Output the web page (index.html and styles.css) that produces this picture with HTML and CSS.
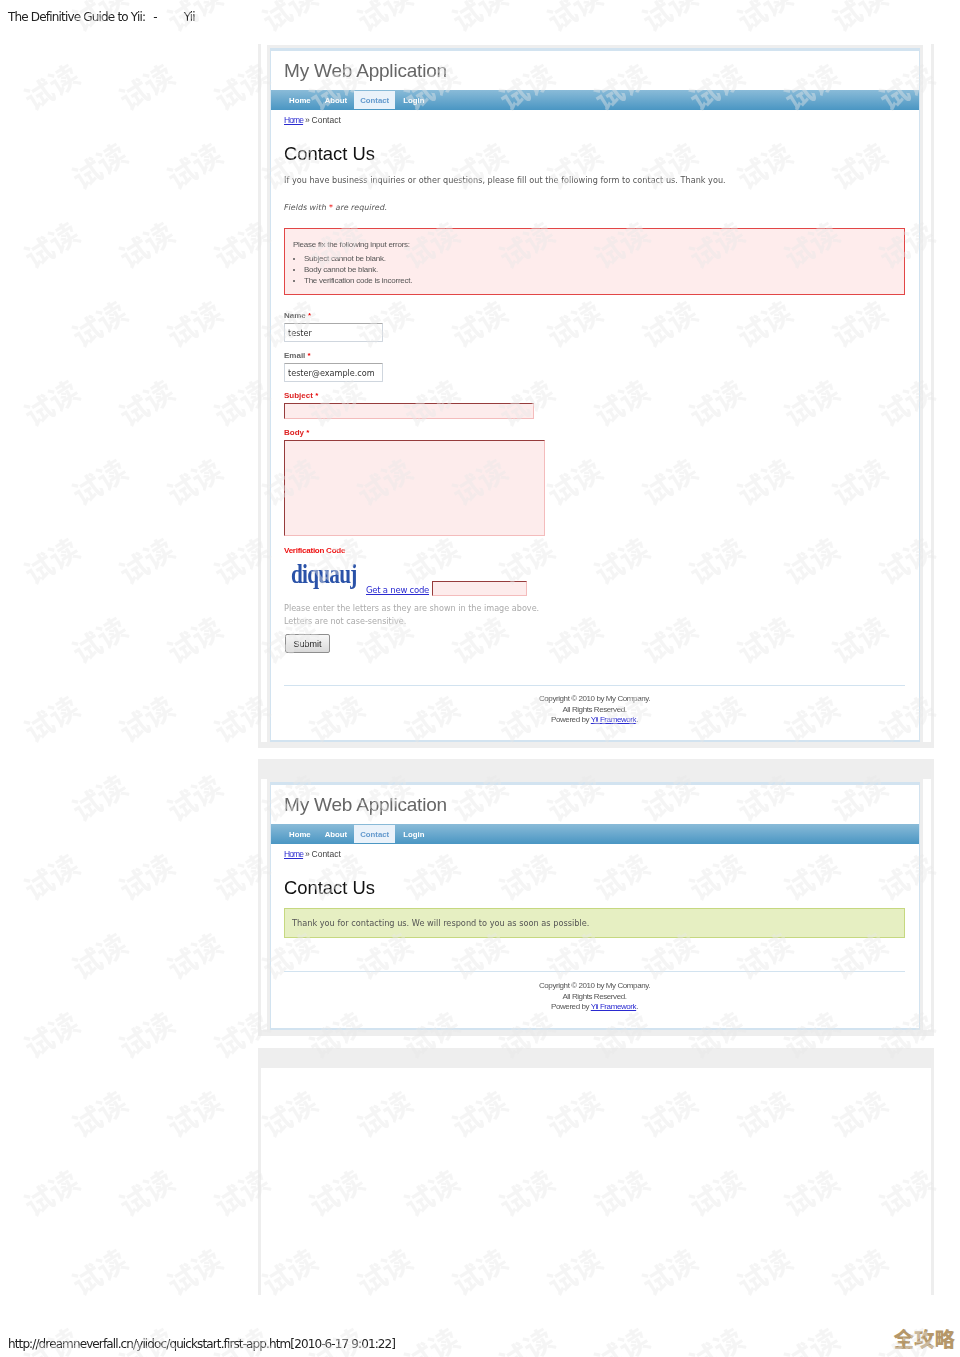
FILE: index.html
```html
<!DOCTYPE html>
<html lang="en">
<head>
<meta charset="utf-8">
<title>The Definitive Guide to Yii</title>
<link rel="stylesheet" href="styles.css">
</head>
<body>
<header class="doc-head"><span>The Definitive Guide to Yii:</span><span class="dash">-</span><span class="yii">Yii</span></header>

<main class="shots">
  <section class="shot shot-first">
    <div class="paper">
      <div class="card">
        <div class="logo">My Web Application</div>
        <nav class="nav"><a>Home</a><a>About</a><a class="active">Contact</a><a>Login</a></nav>
        <div class="content">
          <div class="crumb"><a class="link" href="#">Home</a> » Contact</div>
          <h1>Contact Us</h1>
          <p class="intro">If you have business inquiries or other questions, please fill out the following form to contact us. Thank you.</p>
          <p class="note">Fields with <span class="req">*</span> are required.</p>
          <div class="errors">
            <p>Please fix the following input errors:</p>
            <ul>
              <li>Subject cannot be blank.</li>
              <li>Body cannot be blank.</li>
              <li>The verification code is incorrect.</li>
            </ul>
          </div>
          <div class="row row-name"><label>Name <span class="req">*</span></label><div class="field field-ok">tester</div></div>
          <div class="row row-email"><label>Email <span class="req">*</span></label><div class="field field-ok">tester@example.com</div></div>
          <div class="row row-subject"><label class="bad">Subject <span class="req">*</span></label><div class="field field-bad field-subject"></div></div>
          <div class="row row-body"><label class="bad">Body <span class="req">*</span></label><div class="field field-bad field-body"></div></div>
          <div class="row row-verify">
            <label class="bad plain">Verification Code</label>
            <div class="captcha-row">
              <div class="captcha">diquauj</div>
              <a class="link newcode" href="#">Get a new code</a>
              <div class="field field-bad field-code"></div>
            </div>
            <p class="hint">Please enter the letters as they are shown in the image above.<br>Letters are not case-sensitive.</p>
          </div>
          <div class="submit">Submit</div>
          <footer class="foot foot-first">Copyright © 2010 by My Company.<br>All Rights Reserved.<br>Powered by <a class="link" href="#">Yii Framework</a>.</footer>
        </div>
      </div>
    </div>
  </section>

  <section class="shot shot-second">
    <div class="paper">
      <div class="card">
        <div class="logo">My Web Application</div>
        <nav class="nav"><a>Home</a><a>About</a><a class="active">Contact</a><a>Login</a></nav>
        <div class="content">
          <div class="crumb"><a class="link" href="#">Home</a> » Contact</div>
          <h1>Contact Us</h1>
          <div class="success">Thank you for contacting us. We will respond to you as soon as possible.</div>
          <footer class="foot foot-second">Copyright © 2010 by My Company.<br>All Rights Reserved.<br>Powered by <a class="link" href="#">Yii Framework</a>.</footer>
        </div>
      </div>
    </div>
  </section>

  <section class="shot shot-third"></section>
</main>

<footer class="doc-foot">
  <span class="url">http://dreamneverfall.cn/yiidoc/quickstart.first-app.htm[2010-6-17 9:01:22]</span>
  <span class="brand">全攻略</span>
</footer>

<svg class="watermark" width="960" height="1357" aria-hidden="true">
  <defs>
    <pattern id="wm-a" width="95" height="158" patternUnits="userSpaceOnUse" patternTransform="translate(5 48)">
      <text class="wm-text" transform="translate(47 40) rotate(-32)" text-anchor="middle" y="10">试读</text>
    </pattern>
    <pattern id="wm-b" width="95" height="158" patternUnits="userSpaceOnUse" patternTransform="translate(53 48)">
      <text class="wm-text" transform="translate(47 119) rotate(-32)" text-anchor="middle" y="10">试读</text>
    </pattern>
  </defs>
  <rect x="18" width="924" height="1357" fill="url(#wm-a)"></rect>
  <rect x="66" width="858" height="1357" fill="url(#wm-b)"></rect>
</svg>
</body>
</html>
```

FILE: styles.css
```css
html, body {
  margin: 0;
  padding: 0;
  background: #fff;
}
body {
  position: relative;
  width: 960px;
  height: 1357px;
  overflow: hidden;
  font-family: "Liberation Sans", Arial, sans-serif;
}

/* document chrome */
.doc-head {
  display: flex;
  height: 44px;
  padding: 10px 0 0 8px;
  box-sizing: border-box;
  font-size: 12px;
  line-height: 15px;
  color: #222;
  font-family: "DejaVu Sans", sans-serif;
  letter-spacing: -0.82px;
  filter: blur(.25px);
}
.dash { margin-left: 8px; }
.yii { margin-left: 27px; }
.doc-foot {
  display: flex;
  justify-content: space-between;
  align-items: center;
  height: 24px;
  margin-top: 36px;
  padding: 0 5px 0 8px;
}
.url {
  margin-top: 2px;
  font-family: "DejaVu Sans", sans-serif;
  font-size: 12px;
  letter-spacing: -0.88px;
  color: #222;
  filter: blur(.25px);
}
.brand {
  margin-bottom: 10px;
  font-family: "Noto Sans CJK SC", sans-serif;
  font-size: 20.5px;
  font-weight: 900;
  color: #b59769;
}

/* page frames */
.shots {
  margin-left: 258px;
  width: 676px;
}
.shot {
  box-sizing: border-box;
  width: 676px;
  padding: 0 8px 0 6px;
  border-left: 3px solid #eee;
  border-right: 3px solid #eee;
  border-bottom: 6px solid #eee;
}
.shot-first { height: 704px; padding-top: 1px; }
.shot-second {
  height: 277px;
  margin-top: 11px;
  border-top: 20px solid #eee;
}
.shot-third {
  height: 247px;
  margin-top: 12px;
  border-top: 20px solid #eee;
  border-bottom: 0;
}
.paper {
  height: 100%;
  box-sizing: border-box;
  padding: 3px 3px 0 3px;
  background: #eee;
}
.card {
  box-sizing: border-box;
  height: 100%;
  border: 2px solid #d2e3f0;
  border-top-width: 3px;
  border-left-width: 1px;
  border-right-width: 1px;
  background: #fff;
  filter: blur(.35px);
}

/* Yii application */
.logo {
  height: 39px;
  padding: 6px 0 0 13px;
  box-sizing: border-box;
  font-size: 19px;
  letter-spacing: -.2px;
  line-height: 28px;
  color: #666;
}
.nav {
  display: flex;
  height: 20px;
  padding-left: 18px;
  box-sizing: border-box;
  background: linear-gradient(#8abbd8, #4a96c3);
  font-size: 7.8px;
  font-weight: bold;
  line-height: 22px;
  color: #fff;
}
.nav a:first-child { margin-right: 14px; }
.nav a:nth-child(2) { margin-right: 7px; }
.nav a.active {
  width: 41px;
  margin: 1px 8px 1px 0;
  box-sizing: border-box;
  line-height: 20px;
  text-align: center;
  background: #eaf2fa;
  color: #6399cd;
}
.content { padding: 0 14px 0 13px; }
.link { color: #2a2ad0; text-decoration: underline; }
.crumb {
  height: 20px;
  font-size: 8.5px;
  line-height: 20px;
  color: #444;
  word-spacing: -.5px;
}
.crumb .link { letter-spacing: -.9px; }
h1 {
  margin: 9px 0 0;
  font-size: 18.4px;
  font-weight: normal;
  line-height: 29px;
  color: #111;
}
.intro, .note {
  margin: 0;
  font-family: "DejaVu Sans", sans-serif;
  font-size: 8.1px;
  letter-spacing: .03px;
  line-height: 14px;
  color: #555;
}
.intro { margin-top: 5px; }
.note { margin-top: 14px; font-size: 7.9px; font-style: italic; }
.req { color: #e00; }
.errors {
  box-sizing: border-box;
  height: 67px;
  margin-top: 13px;
  padding: 10px 8px 0;
  border: 1.5px solid #e24646;
  background: #feecec;
  font-size: 8px;
  line-height: 11px;
  color: #555;
  letter-spacing: -.25px;
}
.errors p { margin: 0 0 3px; }
.errors ul { margin: 0; padding: 0 0 0 11px; }
.row label {
  display: block;
  font-size: 8px;
  font-weight: bold;
  line-height: 10px;
  color: #666;
}
.row label.bad { color: #d22; }
.row label.plain { font-weight: bold; letter-spacing: -.25px; color: #e11; }
.field {
  box-sizing: border-box;
  font-family: "DejaVu Sans", sans-serif;
  font-size: 8.1px;
  color: #333;
}
.field-ok {
  width: 99px;
  height: 19px;
  margin-top: 2px;
  padding-left: 3px;
  border: 1px solid #cfd6de;
  border-top-color: #aaa;
  border-radius: 1px;
  line-height: 18px;
}
.field-bad {
  background: #fdecec;
  border: 1px solid #f4bcbc;
  border-top-color: #963c3c;
  border-left-color: #963c3c;
}
.row-name { margin-top: 16px; }
.row-email { margin-top: 9px; }
.row-subject { margin-top: 9px; }
.row-body { margin-top: 9px; }
.row-verify { margin-top: 10px; }
.field-subject { width: 250px; height: 16px; margin-top: 2px; }
.field-body { width: 261px; height: 96px; margin-top: 2px; }
.captcha-row {
  display: flex;
  align-items: flex-end;
  height: 40px;
}
.captcha {
  width: 75px;
  height: 33px;
  padding-left: 7px;
  margin-top: 1px;
  align-self: flex-start;
  box-sizing: content-box;
  font-family: "Liberation Serif", serif;
  font-size: 25px;
  font-weight: bold;
  line-height: 30px;
  letter-spacing: -.9px;
  color: #2a52a8;
  transform: scale(.85, 1.12);
  transform-origin: 7px 0;
}
.newcode {
  margin: 0 3px 0 0;
  font-family: "DejaVu Sans", sans-serif;
  font-size: 8.5px;
  line-height: 11px;
  letter-spacing: -.25px;
}
.field-code { width: 95px; height: 15px; }
.hint {
  margin: 6px 0 0;
  font-family: "DejaVu Sans", sans-serif;
  font-size: 8.1px;
  line-height: 13px;
  color: #aaa;
}
.submit {
  box-sizing: border-box;
  width: 45px;
  height: 19px;
  margin: 6px 0 0 1px;
  border: 1px solid #8e8e8e;
  border-radius: 2px;
  background: linear-gradient(#f8f8f8, #d9d9d9);
  font-size: 9px;
  line-height: 18px;
  text-align: center;
  color: #222;
}
.foot {
  padding-top: 9px;
  border-top: 1px solid #d2e3f0;
  font-size: 8px;
  line-height: 10.7px;
  text-align: center;
  color: #555;
  letter-spacing: -.42px;
}
.foot-first { margin-top: 32px; padding-top: 8px; }
.foot-second { margin-top: 33px; }
.success {
  box-sizing: border-box;
  height: 30px;
  margin-top: 6px;
  padding-left: 7px;
  border: 1px solid #c6d880;
  background: #e6efc2;
  font-family: "DejaVu Sans", sans-serif;
  font-size: 8.2px;
  line-height: 28px;
  color: #555;
}

/* watermark over everything */
.watermark {
  position: absolute;
  left: 0;
  top: 0;
  pointer-events: none;
}
.wm-text {
  font-family: "Noto Sans CJK SC", sans-serif;
  font-size: 29px;
  font-weight: 700;
  fill: rgba(232, 232, 232, .42);
}
```
